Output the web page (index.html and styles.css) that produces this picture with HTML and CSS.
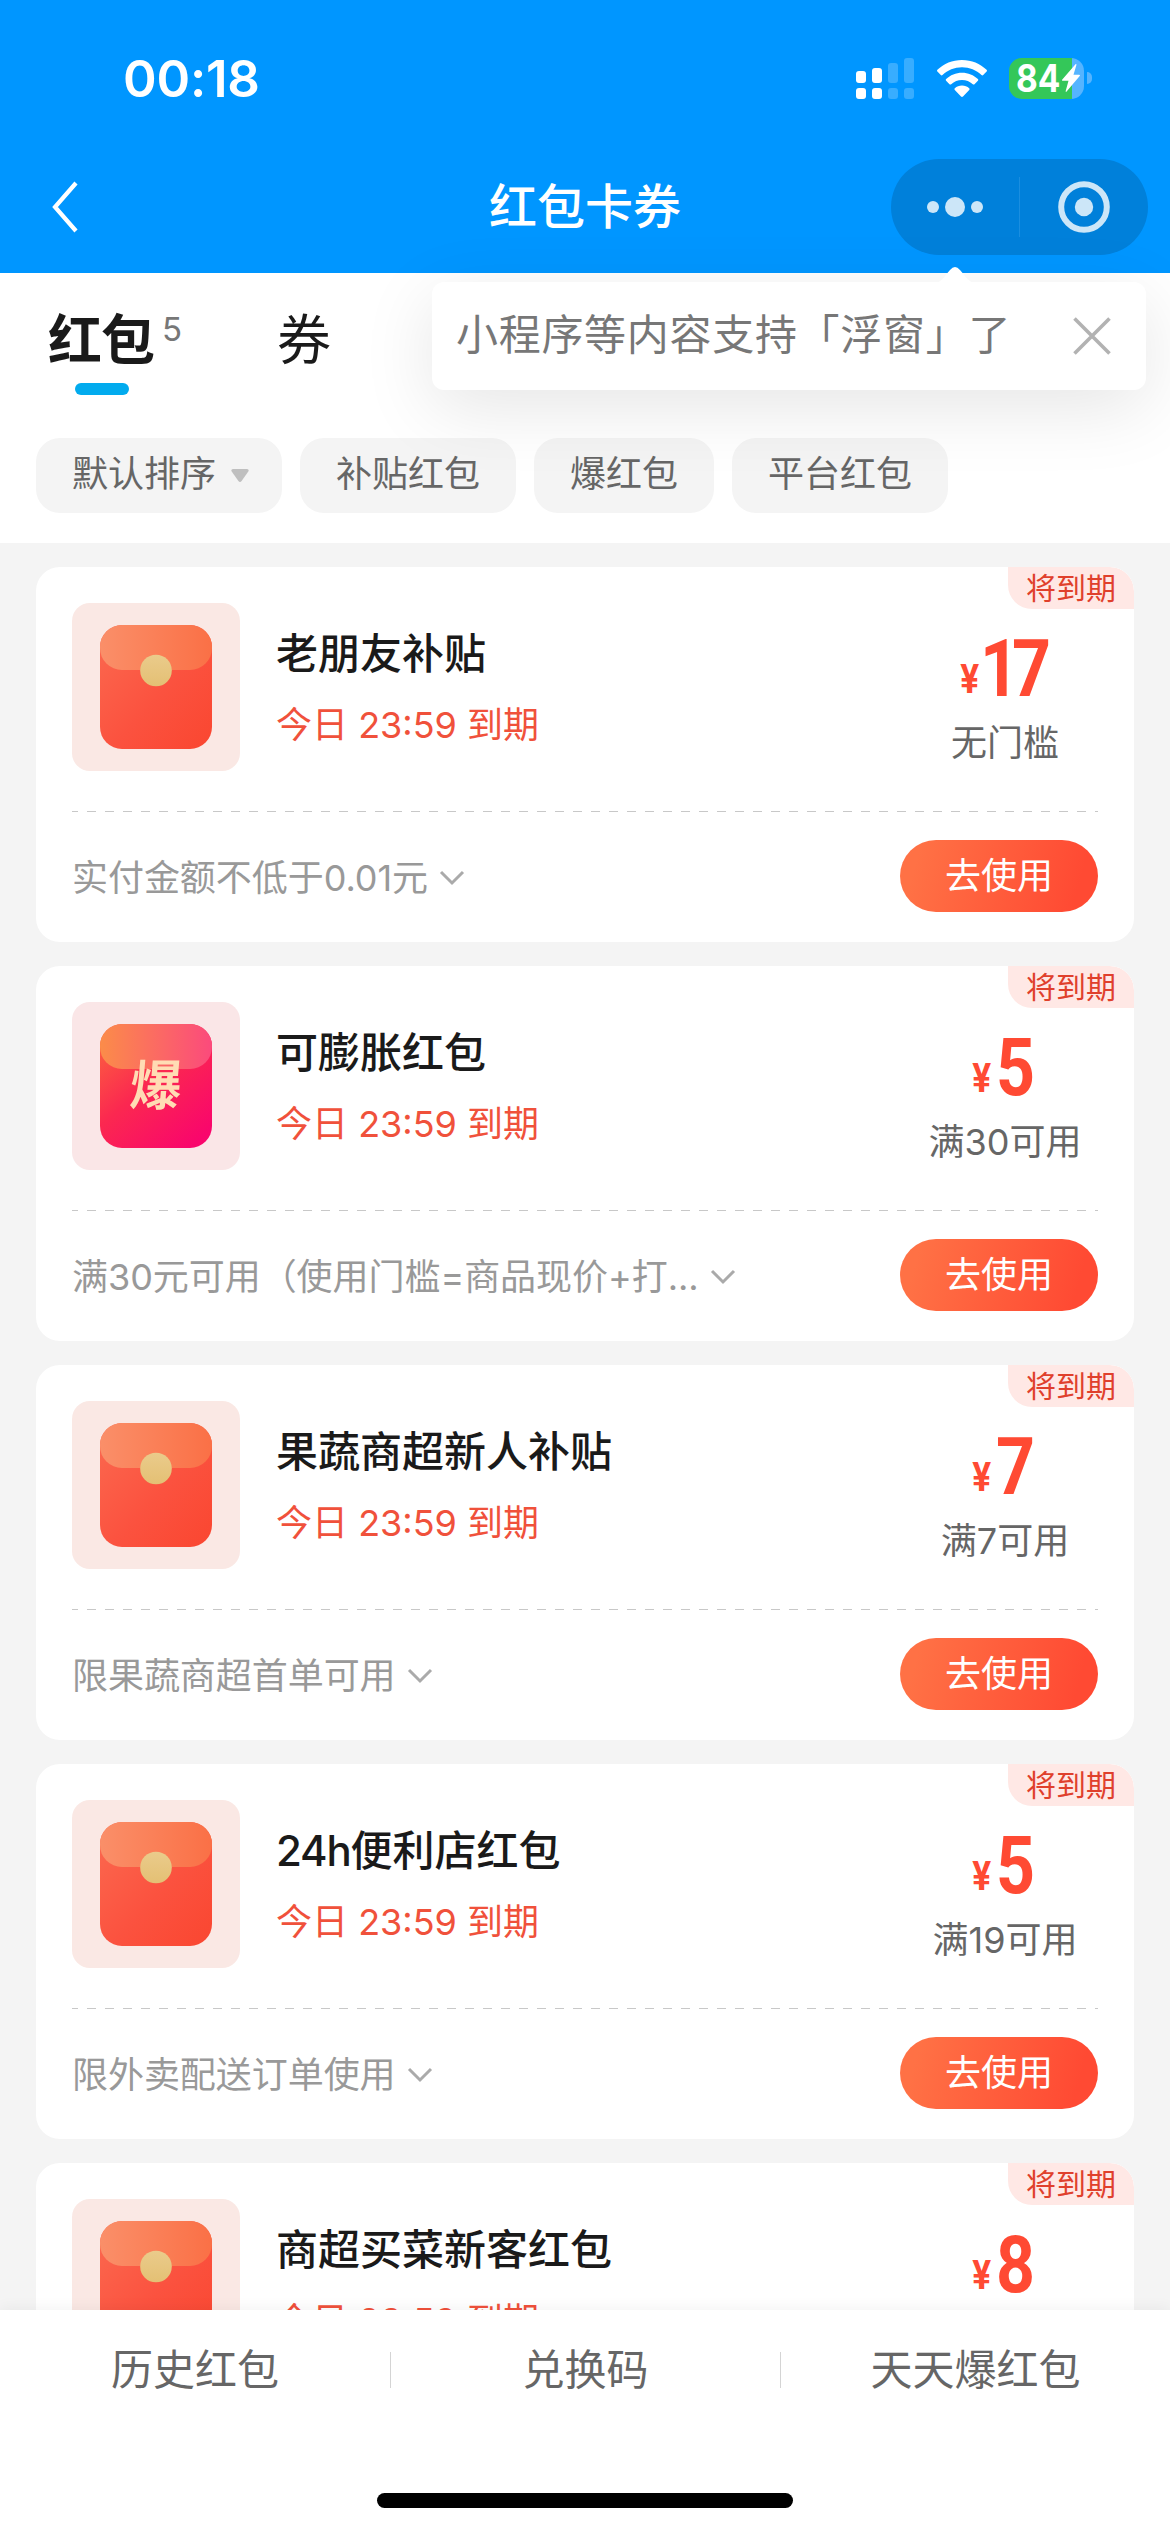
FILE: index.html
```html
<!DOCTYPE html>
<html lang="zh-CN">
<head>
<meta charset="utf-8">
<title>红包卡券</title>
<link rel="stylesheet" href="styles.css">
</head>
<body>
<svg class="defs" width="0" height="0" aria-hidden="true">
  <defs>
    <linearGradient id="body-red" x1="0" y1="0" x2="1" y2="1"><stop offset="0" stop-color="#fb6a50"/><stop offset=".55" stop-color="#fb523f"/><stop offset="1" stop-color="#fa4630"/></linearGradient>
    <linearGradient id="flap-red" x1="0" y1="0" x2="1" y2="0"><stop offset="0" stop-color="#fa8f69"/><stop offset="1" stop-color="#fa7046"/></linearGradient>
    <linearGradient id="seal" x1="0" y1="0" x2="0" y2="1"><stop offset="0" stop-color="#eacb8b"/><stop offset="1" stop-color="#e4c074"/></linearGradient>
    <linearGradient id="body-pink" x1="0" y1="0" x2=".8" y2="1"><stop offset="0" stop-color="#fc6a3c"/><stop offset=".5" stop-color="#fb2850"/><stop offset="1" stop-color="#f9066c"/></linearGradient>
    <linearGradient id="flap-pink" x1="0" y1="0" x2="1" y2="0"><stop offset="0" stop-color="#fb8c49"/><stop offset="1" stop-color="#fb4a7c"/></linearGradient>
    <symbol id="envelope" viewBox="0 0 112 142">
      <rect width="112" height="124" y="0" rx="22" fill="url(#body-red)"/>
      <path d="M0 22A22 22 0 0 1 22 0H90A22 22 0 0 1 112 22V23A22 22 0 0 1 90 45H22A22 22 0 0 1 0 23Z" fill="url(#flap-red)"/>
      <circle cx="56" cy="45.500" r="15.800" fill="url(#seal)"/>
    </symbol>
    <symbol id="burst" viewBox="0 0 112 142">
      <rect width="112" height="124" rx="22" fill="url(#body-pink)"/>
      <path d="M0 22A22 22 0 0 1 22 0H90A22 22 0 0 1 112 22V23A22 22 0 0 1 90 45H22A22 22 0 0 1 0 23Z" fill="url(#flap-pink)"/>
    </symbol>
    <symbol id="chevron" viewBox="0 0 26 16"><path d="M2 2L13 13L24 2" fill="none" stroke="#aaa" stroke-width="3"/></symbol>
  </defs>
</svg>
<div class="screen">
  <header class="header">
    <div class="status">
      <span class="time">00:18</span>
      <div class="status-icons">
        <svg class="signal" viewBox="0 0 58 41" fill="#fff">
          <rect x="0" y="13" width="10" height="12" rx="3"/><rect x="16" y="10" width="10" height="15" rx="3"/>
          <rect x="32" y="5" width="10" height="20" rx="3" opacity=".22"/><rect x="48" y="0" width="10" height="25" rx="3" opacity=".22"/>
          <rect x="0" y="30" width="10" height="11" rx="3"/><rect x="16" y="30" width="10" height="11" rx="3"/>
          <rect x="32" y="30" width="10" height="11" rx="3" opacity=".22"/><rect x="48" y="30" width="10" height="11" rx="3" opacity=".22"/>
        </svg>
        <svg class="wifi" viewBox="0 0 50 37" fill="#fff">
          <path d="M25 0C34.600 0 43.200 3.700 49.600 9.800C50.100 10.300 50.100 11 49.600 11.500L46.200 15C45.700 15.500 45 15.500 44.500 15C39.400 10.200 32.500 7.300 25 7.300S10.600 10.200 5.500 15C5 15.500 4.300 15.500 3.800 15L.4 11.500C-.1 11-.1 10.300 .4 9.800C6.800 3.700 15.400 0 25 0Z"/>
          <path d="M25 12.700C31.100 12.700 36.700 15.100 40.900 19C41.400 19.500 41.400 20.200 40.900 20.700L37.500 24.200C37 24.700 36.300 24.700 35.800 24.200C32.900 21.600 29.100 20 25 20S17.100 21.600 14.200 24.200C13.700 24.700 13 24.700 12.500 24.200L9.100 20.700C8.600 20.200 8.600 19.500 9.100 19C13.300 15.100 18.900 12.700 25 12.700Z"/>
          <path d="M25 25.500C27.800 25.500 30.300 26.500 32.200 28.200C32.700 28.700 32.700 29.400 32.200 29.900L26 36.500C25.400 37.100 24.600 37.100 24 36.500L17.800 29.900C17.300 29.400 17.300 28.700 17.800 28.200C19.700 26.500 22.200 25.500 25 25.500Z"/>
        </svg>
        <div class="battery">
          <div class="battery-body"><span class="battery-num">84</span>
            <svg class="bolt" viewBox="0 0 18 28"><path d="M13.500 .3C14.100-.2 14.600 .2 14.400 .9L11.500 10.800H17.200C18 10.800 18.200 11.500 17.700 12.100L4.600 27.600C4.100 28.200 3.500 27.800 3.700 27.100L6.500 16.800H.8C0 16.800-.2 16.100 .3 15.500Z" fill="#fff"/></svg>
          </div>
          <span class="battery-nub"></span>
        </div>
      </div>
    </div>
    <div class="nav">
      <svg class="back" viewBox="0 0 26 52"><path d="M24 2L3 26L24 50" fill="none" stroke="#fff" stroke-width="4.200"/></svg>
      <h1 class="nav-title">红包卡券</h1>
      <div class="capsule">
        <svg class="more" viewBox="0 0 56 20" fill="#cce6f8"><circle cx="6" cy="10" r="6"/><circle cx="28" cy="10" r="10"/><circle cx="50" cy="10" r="6"/></svg>
        <span class="capsule-line"></span>
        <svg class="target" viewBox="0 0 52 52"><circle cx="26" cy="26" r="22.800" fill="none" stroke="#cce6f8" stroke-width="6"/><circle cx="26" cy="26" r="9.200" fill="#cce6f8"/></svg>
      </div>
    </div>
  </header>

  <section class="top">
    <div class="tabs">
      <div class="tab active"><span class="tab-label">红包</span><span class="count">5</span></div>
      <div class="tab">券</div>
    </div>
    <div class="chips">
      <span class="chip sort">默认排序<svg class="caret" viewBox="0 0 18 13"><path d="M2 0H16Q18.500 .5 17.300 2.600L10.600 12Q9 13.800 7.400 12L.7 2.600Q-.5 .5 2 0Z" fill="#bfbfbf"/></svg></span>
      <span class="chip">补贴红包</span>
      <span class="chip">爆红包</span>
      <span class="chip">平台红包</span>
    </div>
  </section>

  <main class="list">
    <article class="card">
      <span class="tag">将到期</span>
      <div class="main">
        <div class="thumb"><svg><use href="#envelope"/></svg></div>
        <div class="info"><h2>老朋友补贴</h2><p>今日 23:59 到期</p></div>
        <div class="value"><div class="price wide"><small>¥</small><b>17</b></div><div class="limit">无门槛</div></div>
      </div>
      <div class="rule"></div>
      <div class="foot"><span class="note">实付金额不低于0.01元</span><svg class="chev"><use href="#chevron"/></svg><a class="btn">去使用</a></div>
    </article>
    <article class="card">
      <span class="tag">将到期</span>
      <div class="main">
        <div class="thumb pink"><svg><use href="#burst"/></svg><span class="burst-char">爆</span></div>
        <div class="info"><h2>可膨胀红包</h2><p>今日 23:59 到期</p></div>
        <div class="value"><div class="price"><small>¥</small><b>5</b></div><div class="limit">满30可用</div></div>
      </div>
      <div class="rule"></div>
      <div class="foot"><span class="note">满30元可用（使用门槛=商品现价+打...</span><svg class="chev"><use href="#chevron"/></svg><a class="btn">去使用</a></div>
    </article>
    <article class="card">
      <span class="tag">将到期</span>
      <div class="main">
        <div class="thumb"><svg><use href="#envelope"/></svg></div>
        <div class="info"><h2>果蔬商超新人补贴</h2><p>今日 23:59 到期</p></div>
        <div class="value"><div class="price"><small>¥</small><b>7</b></div><div class="limit">满7可用</div></div>
      </div>
      <div class="rule"></div>
      <div class="foot"><span class="note">限果蔬商超首单可用</span><svg class="chev"><use href="#chevron"/></svg><a class="btn">去使用</a></div>
    </article>
    <article class="card">
      <span class="tag">将到期</span>
      <div class="main">
        <div class="thumb"><svg><use href="#envelope"/></svg></div>
        <div class="info"><h2><span class="latin">24h</span>便利店红包</h2><p>今日 23:59 到期</p></div>
        <div class="value"><div class="price"><small>¥</small><b>5</b></div><div class="limit">满19可用</div></div>
      </div>
      <div class="rule"></div>
      <div class="foot"><span class="note">限外卖配送订单使用</span><svg class="chev"><use href="#chevron"/></svg><a class="btn">去使用</a></div>
    </article>
    <article class="card">
      <span class="tag">将到期</span>
      <div class="main">
        <div class="thumb"><svg><use href="#envelope"/></svg></div>
        <div class="info"><h2>商超买菜新客红包</h2><p>今日 23:59 到期</p></div>
        <div class="value"><div class="price"><small>¥</small><b>8</b></div></div>
      </div>
    </article>
  </main>

  <footer class="footer">
    <nav class="links"><a>历史红包</a><a>兑换码</a><a>天天爆红包</a></nav>
    <div class="home"></div>
  </footer>

  <aside class="tip">
    <svg class="tip-arrow" viewBox="0 0 38 16"><path d="M0 16C5 15 8 10 14 3Q19-3 24 3C30 10 33 15 38 16Z" fill="#fff"/></svg>
    <span class="tip-text">小程序等内容支持「浮窗」了</span>
    <svg class="close" viewBox="0 0 38 38"><path d="M1.500 1.500L36.500 36.500M36.500 1.500L1.500 36.500" stroke="#b2b2b2" stroke-width="3.600"/></svg>
  </aside>
</div>
</body>
</html>
```
FILE: styles.css
```css
* { box-sizing: border-box; margin: 0; padding: 0; }
body {
  width: 1170px; height: 2532px; overflow: hidden;
  font-family: Inter, "Noto Sans CJK SC", sans-serif;
  background: #f4f4f4; color: #1a1a1a;
}
svg { display: block; }
.defs { position: absolute; }
.screen { position: relative; width: 1170px; height: 2532px; display: flex; flex-direction: column; overflow: hidden; }

.header { height: 273px; flex: none; background: #0096ff; color: #fff; }
.status { height: 141px; padding: 15px 78px 0 123px; display: flex; align-items: center; justify-content: space-between; }
.time { font-size: 51px; font-weight: 600; line-height: 60px; padding-top: 1px; letter-spacing: -.2px; }
.status-icons { display: flex; align-items: center; }
.signal { width: 58px; height: 41px; margin-right: 23px; }
.wifi { width: 50px; height: 37px; margin-right: 22px; }
.battery { display: flex; align-items: center; gap: 3px; }
.battery-body {
  width: 75px; height: 41px; border-radius: 13px; padding-left: 7px;
  display: flex; align-items: center;
  background: linear-gradient(90deg, #34c759 63px, #55b4ff 63px);
}
.battery-num { width: 46px; font-size: 38px; line-height: 41px; font-weight: 700; transform: scaleX(.88); transform-origin: left; }
.bolt { width: 18px; height: 28px; }
.battery-nub { width: 5px; height: 12px; border-radius: 0 6px 6px 0; background: #55b4ff; }

.nav { height: 132px; padding: 0 22px 0 52px; display: grid; grid-template-columns: 350px 1fr 350px; align-items: center; }
.back { width: 26px; height: 52px; }
.nav-title { font-size: 48px; line-height: 60px; font-weight: 500; text-align: center; transform: translateX(-15px); }
.capsule { justify-self: end; width: 257px; height: 96px; border-radius: 48px; background: #0080da; display: flex; align-items: center; padding-left: 36px; }
.more { width: 56px; height: 20px; }
.capsule-line { width: 1px; height: 60px; background: #1a8ee0; margin: 0 38px 0 36px; }
.target { width: 52px; height: 52px; }

.top { height: 270px; flex: none; background: #fff; padding: 35px 36px 0; }
.tabs { display: flex; height: 130px; padding-left: 12px; font-size: 54px; line-height: 66px; }
.tab { width: 229px; }
.tab.active { display: flex; align-items: flex-start; position: relative; }
.tab-label { font-weight: 700; letter-spacing: -1px; }
.count { font-size: 33px; line-height: 40px; padding-left: 8px; padding-top: 1px; color: #777; }
.tab.active::after { content: ""; position: absolute; left: 27px; top: 75px; width: 54px; height: 12px; border-radius: 6px; background: #02abee; }
.chips { display: flex; gap: 18px; }
.chip { height: 75px; padding: 0 36px; border-radius: 24px; background: #f4f4f4; color: #666; font-size: 36px; line-height: 72px; }
.sort { display: flex; align-items: center; padding-right: 33px; padding-bottom: 3px; }
.caret { width: 18px; height: 13px; margin: 3px 0 0 15px; }

.list { flex: 1; min-height: 0; overflow: hidden; padding: 24px 36px 0; display: flex; flex-direction: column; gap: 24px; }
.card { position: relative; flex: none; height: 375px; border-radius: 24px; background: #fff; overflow: hidden; padding: 36px 36px 0; }
.tag {
  position: absolute; right: 0; top: 0; width: 126px; height: 42px;
  border-radius: 0 24px 0 24px; background: #ffe8e5; color: #e0402c;
  font-size: 30px; line-height: 42px; padding-left: 18px;
}
.main { display: flex; height: 208px; }
.thumb { position: relative; width: 168px; height: 168px; border-radius: 18px; background: #fae8e4; padding: 22px 28px; }
.thumb svg { width: 112px; height: 142px; }
.thumb.pink { background: #fae6e7; }
.burst-char {
  position: absolute; left: 57px; top: 54px; width: 54px; text-align: center;
  font-size: 54px; line-height: 60px; font-weight: 700; color: #ffdcb4; transform: scaleX(.95) skewX(-5deg);
}
.info { flex: 1; padding: 23px 0 0 36px; }
.info h2 { font-size: 42px; line-height: 56px; font-weight: 500; }
.latin { letter-spacing: -1.2px; }
.info p { font-size: 36px; line-height: 50px; margin-top: 18px; color: #f0513b; }
.value { width: 186px; padding-top: 25px; text-align: center; }
.price {
  height: 82px; display: flex; justify-content: center; align-items: baseline; gap: 3px;
  color: #ff4a33; font-family: Roboto, sans-serif; line-height: 82px; transform: translateX(-5px);
}
.price small { font-size: 40px; font-weight: 700; transform: translateY(-3px) scaleX(.88); }
.price b { font-size: 79px; letter-spacing: -8px; margin-right: -4px; transform: scaleX(.86); transform-origin: left; }
.price.wide { transform: none; }
.price.wide b { margin-left: -4px; }
.limit { font-size: 36px; line-height: 50px; margin-top: 8px; color: #666; white-space: nowrap; }
.rule { height: 1px; background: repeating-linear-gradient(90deg, #c8c8c8 0 6px, transparent 6px 15px, #c8c8c8 15px 18px); }
.foot { display: flex; align-items: center; height: 128px; color: #999; }
.note { font-size: 36px; line-height: 50px; padding-top: 3px; letter-spacing: -.05px; white-space: nowrap; }
.chev { width: 26px; height: 16px; margin: 3px 0 0 11px; }
.btn { margin-left: auto; width: 198px; height: 72px; border-radius: 36px; text-align: center; font-size: 36px; line-height: 72px; color: #fff; background: linear-gradient(105deg, #ff7145 10%, #ff4a33 88%); }

.footer { position: relative; flex: none; height: 222px; background: #fff; box-shadow: 0 -2px 14px rgba(0,0,0,.05); }
.links { display: grid; grid-template-columns: repeat(3, 1fr); padding-top: 42px; }
.links a { height: 36px; font-size: 42px; line-height: 36px; text-align: center; color: #666; }
.links a + a { border-left: 1px solid #d4d4d4; }
.home { width: 416px; height: 15px; border-radius: 8px; background: #000; margin: 105px auto 0; }

.tip {
  position: absolute; left: 432px; top: 282px; width: 714px; height: 108px; border-radius: 12px;
  display: flex; align-items: center; justify-content: space-between; padding: 0 35px 0 24px;
  background: #fff; color: #777; font-size: 42px; letter-spacing: .7px; white-space: nowrap;
  box-shadow: 0 18px 72px rgba(0,0,0,.1);
}
.tip-text { line-height: 50px; padding-bottom: 2px; }
.tip-arrow { position: absolute; left: 504px; top: -15px; width: 38px; height: 16px; }
.close { width: 38px; height: 38px; }
```
